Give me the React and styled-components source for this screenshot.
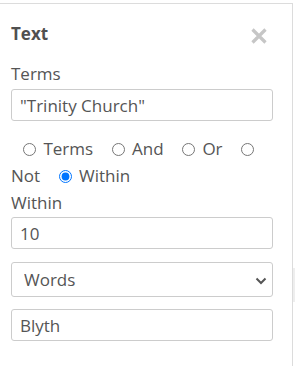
import React from "react";
import styled, { createGlobalStyle } from "styled-components";

const Global = createGlobalStyle`
  html, body { margin: 0; padding: 0; background: #fff; }
  body { font-family: "Open Sans", "Liberation Sans", sans-serif; color: #555; }
  * { box-sizing: border-box; }
`;

const Page = styled.div`
  display: flex;
  align-items: flex-start;
  padding-top: 3px;
  width: 295px;
  height: 366px;
`;

const Panel = styled.section`
  flex: none;
  width: 293px;
  height: 363px;
  border-top: 1px solid #dcdcdc;
  border-right: 1px solid #dcdcdc;
  padding: 18px 19px 0 11px;
  font-size: 17px;
`;

const EdgeStrip = styled.div`
  flex: none;
  width: 2px;
  height: 34px;
  margin-top: 265px;
  background: #eeeeee;
`;

const Header = styled.div`
  display: flex;
  align-items: flex-start;
  justify-content: space-between;
  height: 38px;
`;

const Title = styled.h4`
  margin: 0;
  font-size: 17px;
  font-weight: 700;
  line-height: 23px;
  color: #505050;
`;

const Close = styled.button`
  border: 0;
  background: none;
  padding: 0;
  margin: 6px 6px 0 0;
  width: 16px;
  height: 16px;
  cursor: pointer;
  display: block;
`;

const Label = styled.label`
  display: block;
  line-height: 27px;
  color: #555;
`;

const TextInput = styled.input`
  display: block;
  width: 262px;
  height: 32px;
  border: 1px solid #ccc;
  border-radius: 3px;
  padding: 0 8px;
  font-family: inherit;
  font-size: 17px;
  color: #555;
  margin-top: ${(p) => p.$top || 0}px;
  outline: none;
`;

const Radios = styled.div`
  margin-top: 14px;
  line-height: 27px;
  text-indent: 7px;
`;

const RadioLabel = styled.label`
  margin-right: 9px;
`;

const Radio = styled.input`
  margin: 0 3px 0 5px;
  vertical-align: -1px;
`;

const SelectWrap = styled.div`
  position: relative;
  width: 262px;
  margin-top: 13px;
`;

const Select = styled.select`
  display: block;
  width: 262px;
  height: 35px;
  border: 1px solid #ccc;
  border-radius: 3px;
  background: #fff;
  padding: 0 0 0 12px;
  font-family: inherit;
  font-size: 17px;
  color: #555;
  appearance: none;
  outline: none;
`;

const Chevron = styled.svg`
  position: absolute;
  right: 6px;
  top: 15px;
  pointer-events: none;
`;

export default function App() {
  return (
    <>
      <Global />
      <Page>
        <Panel>
          <Header>
            <Title>Text</Title>
            <Close aria-label="Close">
              <svg width="16" height="16" viewBox="0 0 16 16">
                <path d="M1.5 1.5 L14.5 14.5 M14.5 1.5 L1.5 14.5" stroke="#c6c6c6" strokeWidth="3.2" />
              </svg>
            </Close>
          </Header>
          <Label>Terms</Label>
          <TextInput defaultValue={'"Trinity Church"'} $top={2} />
          <Radios>
            <RadioLabel><Radio type="radio" name="op" /> Terms</RadioLabel>{" "}
            <RadioLabel><Radio type="radio" name="op" /> And</RadioLabel>{" "}
            <RadioLabel><Radio type="radio" name="op" /> Or</RadioLabel>{" "}
            <RadioLabel><Radio type="radio" name="op" /> Not</RadioLabel>{" "}
            <RadioLabel><Radio type="radio" name="op" defaultChecked /> Within</RadioLabel>
          </Radios>
          <Label>Within</Label>
          <TextInput defaultValue="10" $top={1} />
          <SelectWrap>
            <Select defaultValue="Words">
              <option>Words</option>
              <option>Characters</option>
            </Select>
            <Chevron width="12" height="8" viewBox="0 0 12 8">
              <path d="M1.5 1.5 L6 6 L10.5 1.5" fill="none" stroke="#555" strokeWidth="2" />
            </Chevron>
          </SelectWrap>
          <TextInput defaultValue="Blyth" $top={12} />
        </Panel>
        <EdgeStrip />
      </Page>
    </>
  );
}
